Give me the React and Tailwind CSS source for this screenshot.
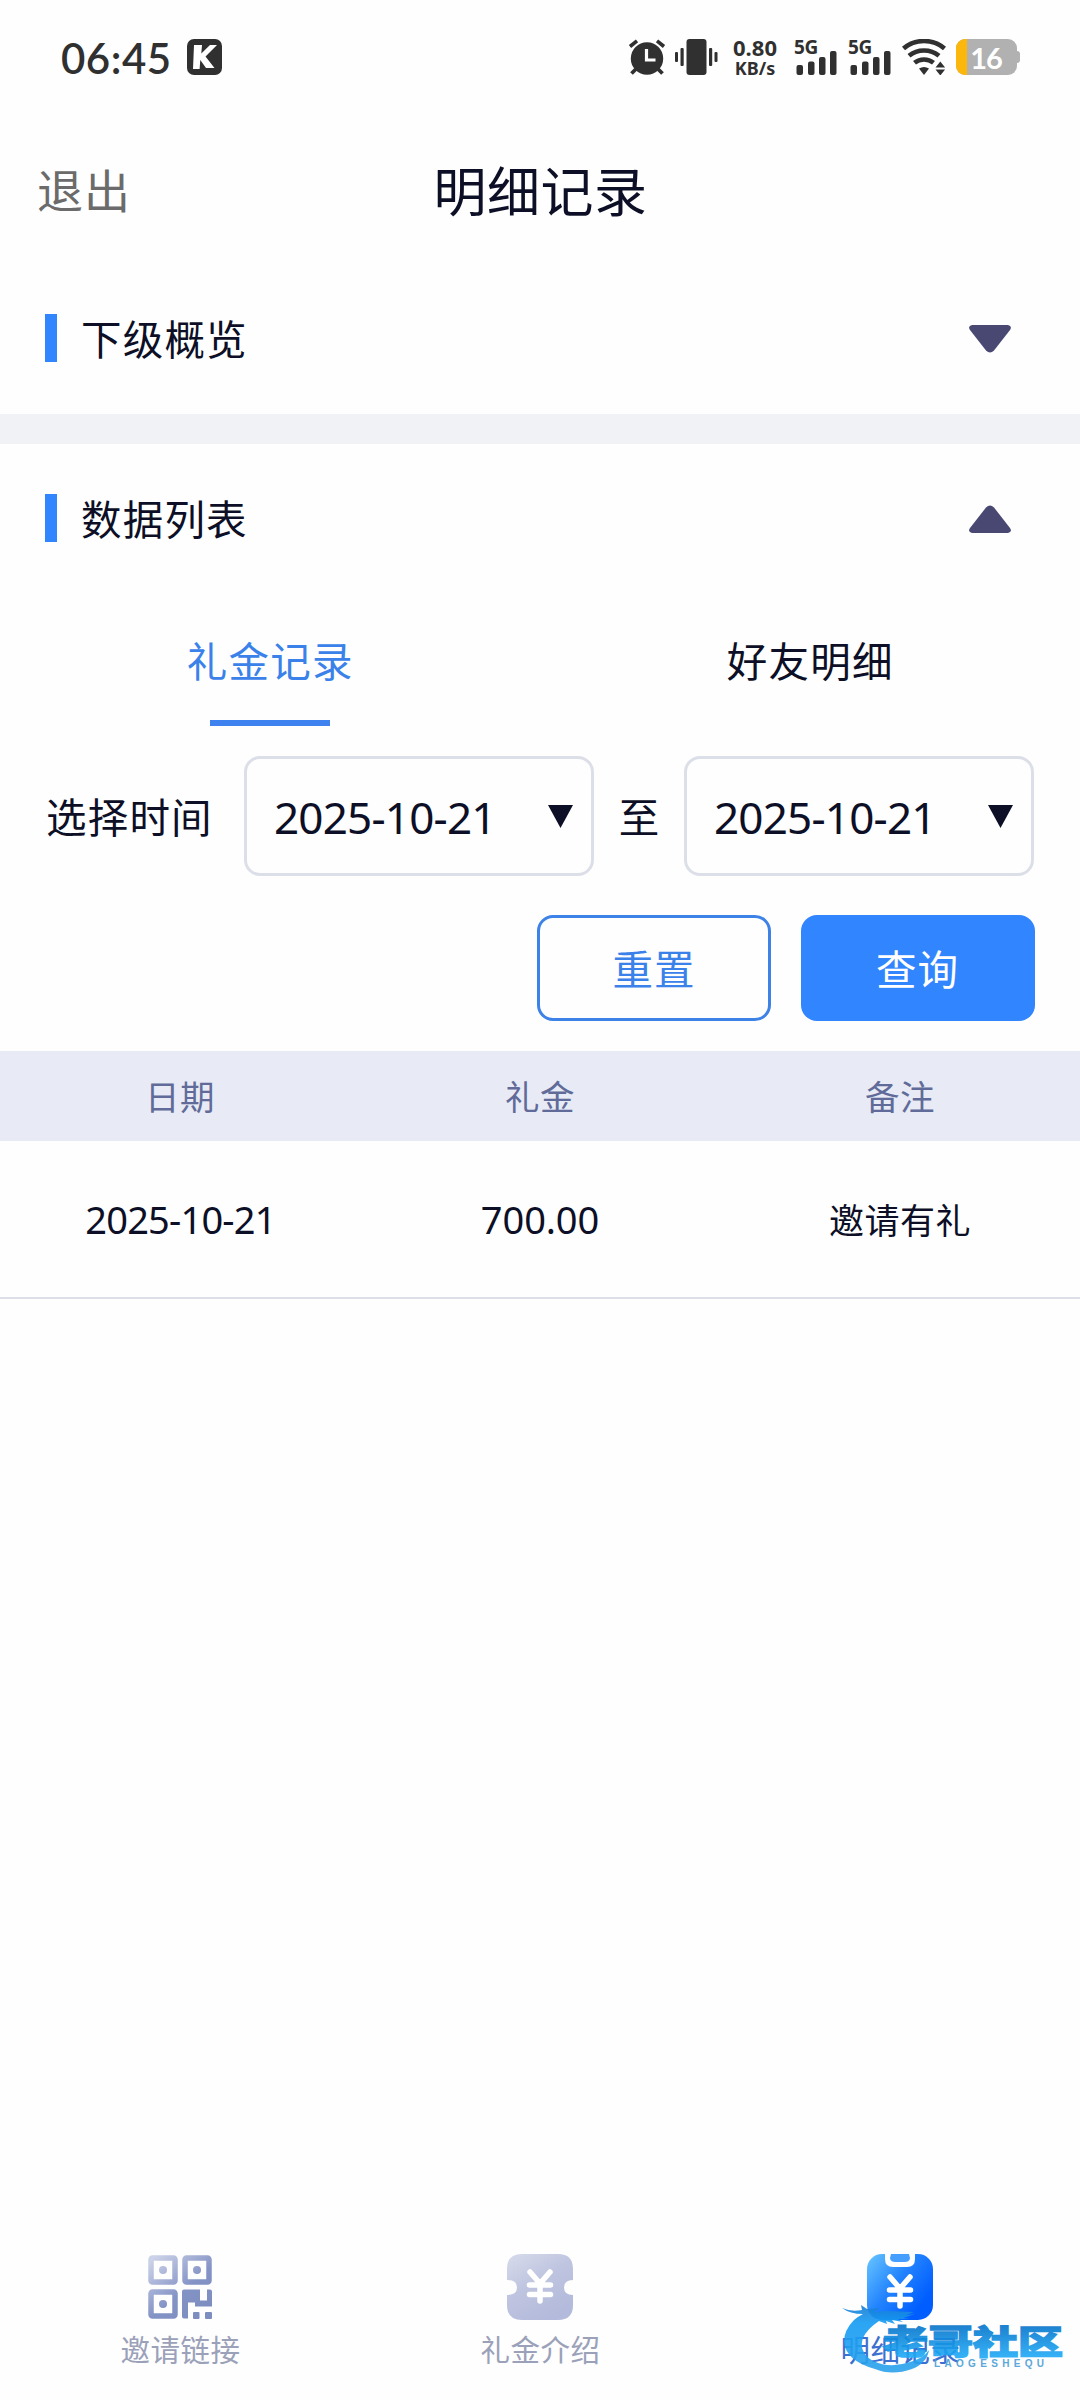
import React from "react";

const CJK = "font-['Noto_Sans_CJK_SC',sans-serif]";
const LATIN = "font-['Noto_Sans','Noto_Sans_CJK_SC',sans-serif]";

function AlarmIcon() {
  return (
    <svg className="h-9 w-[38px]" viewBox="0 0 38 36" fill="none">
      <circle cx="19" cy="19.5" r="16.2" fill="#303030" />
      <path d="M2 7.5 9 1.8M29 1.8l7 5.7" stroke="#303030" strokeWidth="3.6" />
      <path d="M8 30l-4.5 4.5M30 30l4.5 4.5" stroke="#303030" strokeWidth="3.8" />
      <path d="M18.5 10v11h9" stroke="#fff" strokeWidth="3.2" />
    </svg>
  );
}

function VibrateIcon() {
  return (
    <svg className="h-9 w-[43px]" viewBox="0 0 43 36" fill="#303030">
      <rect x="11.5" y="0" width="20" height="36" rx="3" />
      <rect x="0" y="13" width="3" height="10" rx="1" />
      <rect x="5.5" y="9" width="3.2" height="18" rx="1" />
      <rect x="34" y="9" width="3.2" height="18" rx="1" />
      <rect x="39.5" y="13" width="3" height="10" rx="1" />
    </svg>
  );
}

function Signal() {
  return (
    <div className="relative h-9 w-[43px]">
      <span className={`absolute top-0 left-0 text-[19px] leading-4 font-bold tracking-[-0.4px] ${LATIN}`}>5G</span>
      <svg className="absolute inset-0 h-9 w-[43px]" viewBox="0 0 43 36" fill="#303030">
        <rect x="2.5" y="26" width="6.5" height="10" rx="2" />
        <rect x="14" y="22.5" width="6.5" height="13.5" rx="2" />
        <rect x="25" y="18" width="6.5" height="18" rx="2" />
        <rect x="36" y="12" width="6.5" height="24" rx="2" />
      </svg>
    </div>
  );
}

function WifiIcon() {
  return (
    <svg className="h-9 w-11" viewBox="0 0 44 36" fill="none" stroke="#303030" strokeWidth="4.6">
      <path d="M1.5 9.5C13-.5 31-.5 42.5 9.5" />
      <path d="M7 16.8c8.500-7 21.500-7 30 0" />
      <path d="M12.500 23.800c5.500-4.500 13.500-4.500 19 0" />
      <path d="M17 29.500q5-3 10 0L22 36z" fill="#303030" stroke="none" />
      <path d="M33.500 28.500 38.300 22.500 43.100 28.500zM33.500 30.500 38.300 36.500 43.100 30.500z" fill="#303030" stroke="none" />
    </svg>
  );
}

function Battery() {
  return (
    <div className="flex h-9 items-center">
      <div className="flex h-9 w-[61px] items-center overflow-hidden rounded-[9px] bg-[#b1b1b1]">
        <div className="h-9 w-[11px] bg-[#fcb70d]" />
        <span className="w-[38px] pt-px text-center font-['Lato',sans-serif] text-[29px] leading-9 font-bold tracking-[-1px] text-white">16</span>
      </div>
      <div className="h-3 w-[3px] rounded-r-[3px] bg-[#b1b1b1]" />
    </div>
  );
}

function StatusBar() {
  return (
    <div className="flex h-[114px] items-center pl-[61px] pr-[60px] text-[#303030]">
      <span className="w-[111px] pt-[2px] font-['Lato',sans-serif] text-[42px] leading-9 font-semibold tracking-[0.5px]">06:45</span>
      <svg className="ml-[15px] h-9 w-[35px]" viewBox="0 0 35 36">
        <rect width="35" height="36" rx="7" fill="#303030" />
        <path d="M7 6h8l-.7 8.500L23 6h7L18.500 17.500 27.500 29H19l-5.700-8-.7 9H6z" fill="#fff" />
      </svg>
      <div className="ml-auto flex items-center">
        <AlarmIcon />
        <div className="ml-[9px]"><VibrateIcon /></div>
        <div className={`ml-[14px] flex h-9 w-[46px] flex-col items-center justify-between font-bold ${LATIN}`}>
          <span className="text-[22px] leading-[17px]">0.80</span>
          <span className="text-[18px] leading-[13px]">KB/s</span>
        </div>
        <div className="ml-[16px]"><Signal /></div>
        <div className="ml-[11px]"><Signal /></div>
        <div className="ml-[11px]"><WifiIcon /></div>
        <div className="ml-[10px]"><Battery /></div>
      </div>
    </div>
  );
}

function Triangle({ up }) {
  return (
    <svg className={up ? "mt-px h-7 w-[42px] rotate-180" : "mt-px h-7 w-[42px]"} viewBox="0 0 42 28">
      <path d="M3 0h36q4.500 1 2 5L25 25.500q-4 4-8 0L1 5Q-1.500 1 3 0z" fill="#494873" />
    </svg>
  );
}

function SectionHead({ title, up }) {
  return (
    <div className="flex h-12 items-center pr-[69px] pl-[45px]">
      <div className="h-12 w-3 bg-[#3185fe]" />
      <h2 className="ml-6 text-[40.500px] leading-12 tracking-[1.2px]">{title}</h2>
      <div className="ml-auto"><Triangle up={up} /></div>
    </div>
  );
}

function DateSelect({ value }) {
  return (
    <div className="flex h-[120px] w-[350px] items-center justify-between rounded-[16px] border-[3px] border-[#dcdfe8] pr-[18px] pl-[27px]">
      <span className={`pt-[2px] text-[44px] tracking-[-0.8px] ${LATIN}`}>{value}</span>
      <svg className="h-[23px] w-[25px]" viewBox="0 0 25 23"><path d="M0 0h25L12.500 23z" fill="#0c0f26" /></svg>
    </div>
  );
}

function QrIcon() {
  return (
    <svg className="h-[66px] w-[66px]" viewBox="0 0 66 66">
      <defs>
        <linearGradient id="qr" gradientUnits="userSpaceOnUse" x1="5" y1="5" x2="52" y2="62">
          <stop offset="0" stopColor="#ccd2e8" />
          <stop offset=".6" stopColor="#8493c6" />
          <stop offset="1" stopColor="#7e8dc0" />
        </linearGradient>
      </defs>
      <g fill="none" stroke="url(#qr)" strokeWidth="5.500">
        <rect x="4" y="4" width="24" height="24" rx="1.500" />
        <rect x="38" y="4" width="24" height="24" rx="1.500" />
        <rect x="4" y="38" width="24" height="24" rx="1.500" />
      </g>
      <g fill="url(#qr)">
        <circle cx="16" cy="16" r="4" />
        <circle cx="50" cy="16" r="4" />
        <circle cx="16" cy="50" r="4" />
        <path d="M37 35.500h16v11h7v-11h3q2 0 2 2v15H48v-4h-7v16h-4q-2 0-2-2v-25q0-2 2-2z" />
        <rect x="46" y="58" width="6.500" height="7" rx="1" />
        <rect x="58" y="58" width="7" height="7" rx="1" />
      </g>
    </svg>
  );
}

function YenMark({ y }) {
  return (
    <path
      transform={`translate(33 ${y})`}
      d="M-10-14 0-2.500 10-14M0-2.500V15M-10.500-1h21M-10.500 8.500h21"
      fill="none" stroke="#fff" strokeWidth="5.500" strokeLinecap="round" strokeLinejoin="round"
    />
  );
}

function TicketIcon() {
  return (
    <svg className="h-[66px] w-[66px]" viewBox="0 0 66 66">
      <defs>
        <linearGradient id="ticket" x1="0" y1="0" x2=".6" y2="1">
          <stop offset="0" stopColor="#d7dbeb" />
          <stop offset=".5" stopColor="#bfc5e0" />
          <stop offset="1" stopColor="#b3badb" />
        </linearGradient>
      </defs>
      <path d="M15 0h36q15 0 15 15v11q-9 0-9 7.500T66 41v10q0 15-15 15H15Q0 66 0 51V41q10 0 10-7.500T0 26V15Q0 0 15 0z" fill="url(#ticket)" />
      <YenMark y={32} />
    </svg>
  );
}

function ClipboardIcon() {
  return (
    <svg className="h-[66px] w-[66px]" viewBox="0 0 66 66">
      <defs>
        <linearGradient id="board" x1="0" y1=".1" x2=".85" y2=".75">
          <stop offset="0" stopColor="#62c0ff" />
          <stop offset=".5" stopColor="#2384ff" />
          <stop offset="1" stopColor="#005dff" />
        </linearGradient>
      </defs>
      <rect width="66" height="66" rx="15" fill="url(#board)" />
      <path d="M18 0v5q0 8 8 8h14q8 0 8-8V0z" fill="#fff" />
      <path d="M24 0h18q3 8-4 8H28q-7 0-4-8z" fill="#469fff" />
      <YenMark y={37} />
    </svg>
  );
}

function Watermark() {
  return (
    <svg className="absolute top-[2300px] left-[836px] h-20 w-[236px] opacity-90" viewBox="0 0 236 80">
      <defs>
        <linearGradient id="wm" gradientUnits="userSpaceOnUse" x1="0" y1="6" x2="0" y2="74">
          <stop offset="0" stopColor="#1a7ed4" />
          <stop offset=".25" stopColor="#149cf4" />
          <stop offset="1" stopColor="#2ea3ec" />
        </linearGradient>
        <linearGradient id="wmText" gradientUnits="userSpaceOnUse" x1="0" y1="26" x2="0" y2="56">
          <stop offset="0" stopColor="#0575cc" />
          <stop offset="1" stopColor="#1fa9f5" />
        </linearGradient>
      </defs>
      <path
        d="M6 8q9 4 20 2l-1-5 6 4 13-1-6 4 14-1 26 1-8 3 9-1-12 4 7 1-12 0 5 3-11-2 3 4-9-3 1 3-8-3q-12 8-16 17-5 14 10 23 17 8 37 1 14-4 19-12-2 13-17 19-20 7-37 0Q10 61 8 42q0-12 10-22 5-4 9-6Q14 14 6 8z"
        fill="url(#wm)"
      />
      <text x="47" y="54" textLength="180" lengthAdjust="spacingAndGlyphs" fill="url(#wmText)" stroke="url(#wmText)" strokeWidth="1.500" fontFamily="Noto Sans CJK SC" fontWeight="900" fontSize="33">老哥社区</text>
      <text x="98" y="66.500" textLength="110" fill="#4a9fd6" fontFamily="Liberation Sans" fontWeight="700" fontSize="10">LAOGESHEQU</text>
    </svg>
  );
}

function NavItem({ icon, label, active }) {
  return (
    <div className="flex flex-1 flex-col items-center">
      {icon}
      <span className={active ? "mt-2 pl-px text-[29.500px] leading-10 tracking-[0.5px] text-[#3c6fd0]" : "mt-2 pl-px text-[29.500px] leading-10 tracking-[0.5px] text-[#9ba1b9]"}>{label}</span>
    </div>
  );
}

export default function App() {
  return (
    <div className={`relative flex h-[2400px] w-[1080px] flex-col overflow-hidden bg-[#fefefe] text-[#0c0f26] ${CJK}`}>
      <StatusBar />
      <header className="grid h-[156px] grid-cols-3 items-center px-9 pb-[7px]">
        <span className="pl-px text-[46px] tracking-[1px] text-[#6b6b6b]">退出</span>
        <h1 className="pt-[3px] pl-px text-center text-[53px] tracking-[0.5px]">明细记录</h1>
      </header>
      <section className="h-[144px] pt-[44px]">
        <SectionHead title="下级概览" />
      </section>
      <div className="h-[30px] bg-[#f1f2f5]" />
      <section className="pt-[50px]">
        <SectionHead title="数据列表" up />
        <div className="mt-[88px] flex text-[40.500px] leading-[60px] tracking-[1.2px]">
          <div className="flex flex-1 flex-col items-center text-[#3a82ea]">
            <span className="pl-px">礼金记录</span>
            <div className="mt-[30px] h-[6px] w-[120px] bg-[#3d82ee]" />
          </div>
          <div className="flex-1 pl-px text-center">好友明细</div>
        </div>
        <div className="mt-[30px] flex items-center pl-[46px] text-[40.500px] tracking-[1.2px]">
          <span className="w-[198px]">选择时间</span>
          <DateSelect value="2025-10-21" />
          <span className="w-[90px] pl-px text-center">至</span>
          <DateSelect value="2025-10-21" />
        </div>
        <div className="mt-[39px] flex justify-end gap-[30px] pr-[45px] text-[40.500px] tracking-[1px]">
          <button className="h-[106px] w-[234px] rounded-[16px] border-[3px] border-[#3d82e6] text-[#3a82ea]">重置</button>
          <button className="h-[106px] w-[234px] rounded-[16px] bg-[#3185fe] pr-px text-white">查询</button>
        </div>
        <div className="mt-[30px] grid h-[90px] grid-cols-3 items-center bg-[#e8ebf5] text-center text-[34.500px] tracking-[0.5px] text-[#616b99]">
          <span>日期</span>
          <span>礼金</span>
          <span>备注</span>
        </div>
        <div className="grid h-[158px] grid-cols-3 items-center border-b-2 border-[#dddfe8] text-center text-[35px] tracking-[0.5px]">
          <span className={`pt-px pl-px text-[38px] tracking-[-0.8px] ${LATIN}`}>2025-10-21</span>
          <span className={`pt-px text-[38px] tracking-[-0.1px] ${LATIN}`}>700.00</span>
          <span>邀请有礼</span>
        </div>
      </section>
      <nav className="mt-auto flex h-[146px]">
        <NavItem icon={<QrIcon />} label="邀请链接" />
        <NavItem icon={<TicketIcon />} label="礼金介绍" />
        <NavItem icon={<ClipboardIcon />} label="明细记录" active />
      </nav>
      <Watermark />
    </div>
  );
}
